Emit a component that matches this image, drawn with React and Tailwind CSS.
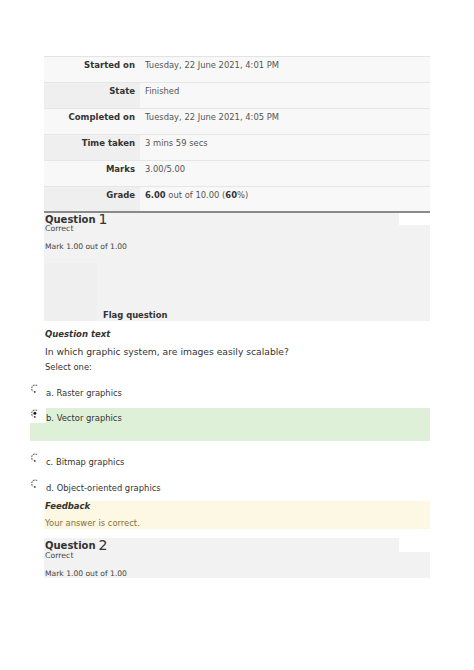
import React from "react";

const font = { fontFamily: '"DejaVu Sans", Verdana, sans-serif' };

function Radio({ checked }) {
  return (
    <svg width="8" height="9" viewBox="0 0 8 9" className="shrink-0">
      <path d="M6.2 1.6 A3.3 3.3 0 1 0 2.2 7.4" fill="none" stroke="#666" strokeWidth="1.1" strokeDasharray="1.8 0.8" />
      <circle cx="3.8" cy="7.9" r="0.85" fill="#333" />
      {checked && <circle cx="3.9" cy="4.3" r="1.5" fill="#222" />}
    </svg>
  );
}

const rows = [
  ["Started on", "Tuesday, 22 June 2021, 4:01 PM", false],
  ["State", "Finished", true],
  ["Completed on", "Tuesday, 22 June 2021, 4:05 PM", false],
  ["Time taken", "3 mins 59 secs", true],
  ["Marks", "3.00/5.00", false],
];

function Option({ label, mt }) {
  return (
    <div className={`ml-[-14px] flex items-start h-[14px] ${mt}`}>
      <div className="w-[16px] pl-[1px]"><Radio /></div>
      <span className="mt-[4px] text-[8.4px] leading-[10px] text-[#333]">{label}</span>
    </div>
  );
}

export default function App() {
  return (
    <div className="w-[474px] h-[670px] bg-white text-[#333] overflow-hidden" style={font}>
      <div className="ml-[44px] w-[386px] pt-[56px]">
        {/* Summary table */}
        <div className="border-t border-[#e3e3e3]">
          {rows.map(([k, v, dark]) => (
            <div key={k} className="flex h-[26px] border-b border-[#e6e6e6] text-[8.5px] leading-[12px]">
              <div className={`w-[96px] text-right pr-[5px] pt-[2px] font-bold text-[#333] ${dark ? "bg-[#efefef]" : "bg-[#f8f8f8]"}`}>{k}</div>
              <div className="flex-1 pl-[5px] pt-[2px] bg-[#f8f8f8] text-[#555] text-[8.4px]">{v}</div>
            </div>
          ))}
          <div className="flex h-[24px] text-[8.5px] leading-[12px]">
            <div className="w-[96px] text-right pr-[5px] pt-[2px] font-bold bg-[#efefef]">Grade</div>
            <div className="flex-1 pl-[5px] pt-[2px] bg-[#f8f8f8] text-[#555] text-[8.4px]">
              <b className="text-[#333]">6.00</b> out of 10.00 (<b className="text-[#333]">60</b>%)
            </div>
          </div>
        </div>
        <div className="h-[2px] bg-[#8a8a8a]" />

        {/* Question 1 */}
        <div className="flex">
          <div className="w-[355px] h-[12px] bg-[#f2f2f2] flex items-end leading-none pl-[1px]">
            <span className="text-[10px] font-bold text-[#333]">Question</span>
            <span className="text-[14px] ml-[3px] text-[#333] leading-[11px]">1</span>
          </div>
        </div>
        <div className="h-[96px] bg-[#f2f2f2] text-[7.8px] leading-[8px] text-[#444]">
          <div className="pl-[1px]">Correct</div>
          <div className="pl-[1px] mt-[10px] text-[7.6px]">Mark 1.00 out of 1.00</div>
          <div className="flex mt-[12px] h-[58px] pl-[1px]">
            <div className="w-[52px] bg-[#efefef]" />
            <div className="flex-1 flex items-end pl-[6px] pb-[1px]">
              <span className="text-[8.4px] font-bold text-[#333] leading-[10px]">Flag question</span>
            </div>
          </div>
        </div>

        {/* Question text */}
        <div className="pl-[1px] mt-[8px] text-[8.5px] font-bold italic leading-[10px] text-[#333]">Question text</div>
        <div className="pl-[1px] mt-[7px] text-[9.2px] leading-[12px] text-[#333]">In which graphic system, are images easily scalable?</div>
        <div className="pl-[1px] mt-[4px] text-[8.4px] leading-[10px] text-[#333]">Select one:</div>

        {/* Options */}
        <Option label="a. Raster graphics" mt="mt-[12px]" />
        <div className="mt-[10px] ml-[-14px]">
          <div className="flex">
            <div className="w-[16px] pl-[1px] pt-[1px]"><Radio checked /></div>
            <div className="flex-1 h-[15px] bg-[#dff0d8] text-[8.4px] leading-[10px] pt-[5px]">b. Vector graphics</div>
          </div>
          <div className="h-[18px] bg-[#dff0d8]" />
        </div>
        <Option label="c. Bitmap graphics" mt="mt-[12px]" />
        <Option label="d. Object-oriented graphics" mt="mt-[12px]" />

        {/* Feedback */}
        <div className="mt-[8px] h-[28px] bg-[#fcf8e3] pl-[1px]">
          <div className="text-[8.5px] font-bold italic leading-[10px] text-[#333]">Feedback</div>
          <div className="mt-[7px] text-[8.4px] leading-[10px] text-[#8a6d3b]">Your answer is correct.</div>
        </div>

        {/* Question 2 */}
        <div className="mt-[9px] flex">
          <div className="w-[355px] h-[14px] bg-[#f2f2f2] flex items-end leading-none pl-[1px] pb-[1px]">
            <span className="text-[10px] font-bold text-[#333]">Question</span>
            <span className="text-[14px] ml-[3px] text-[#333] leading-[11px]">2</span>
          </div>
        </div>
        <div className="h-[26px] bg-[#f2f2f2] text-[7.8px] leading-[8px] text-[#444]">
          <div className="pl-[1px]">Correct</div>
          <div className="pl-[1px] mt-[10px] text-[7.6px]">Mark 1.00 out of 1.00</div>
        </div>
      </div>
    </div>
  );
}
